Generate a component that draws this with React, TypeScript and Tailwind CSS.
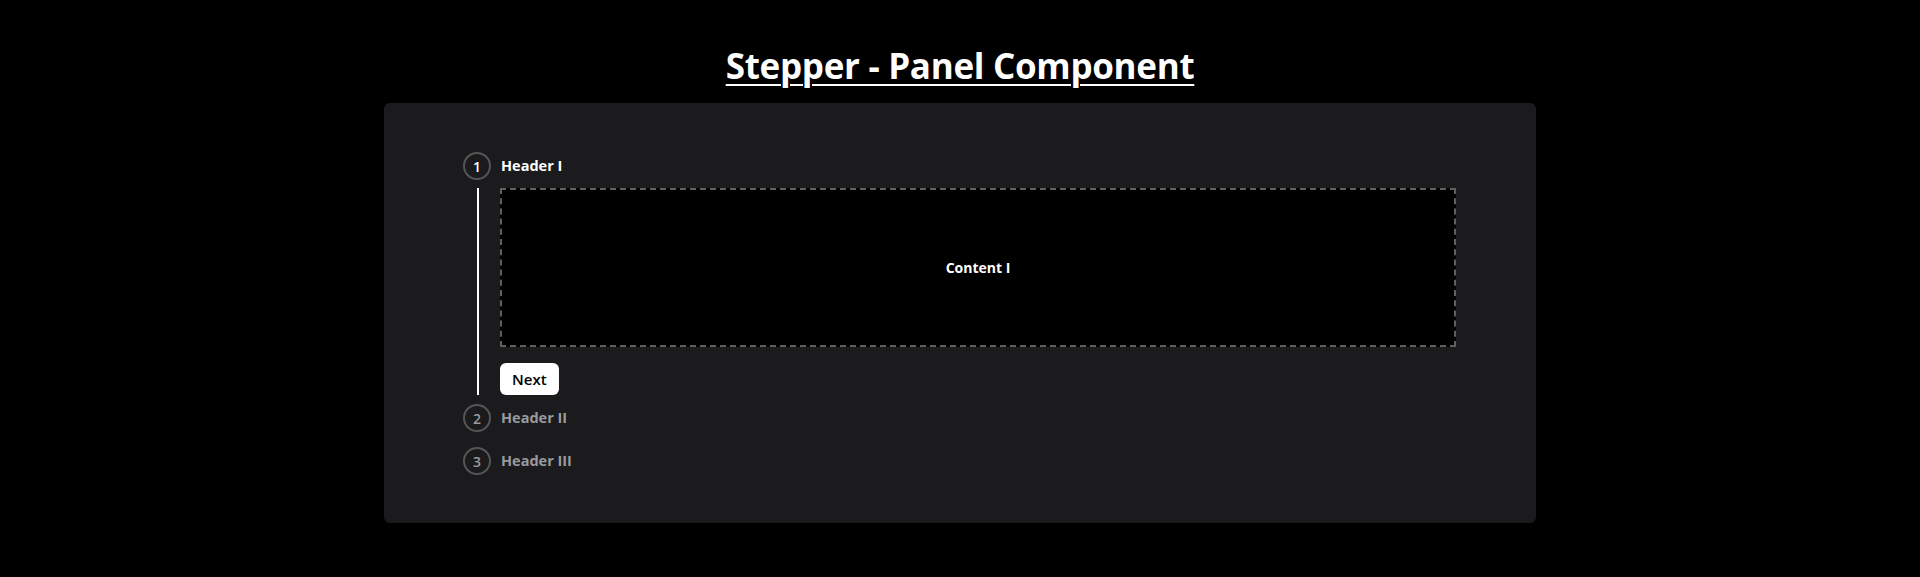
export default function App() {
  return (
    <div
      className="min-h-screen bg-black text-white pt-[42px]"
      style={{ fontFamily: '"Open Sans", "Noto Sans", sans-serif' }}
    >
      <h1 className="text-center text-[35px] leading-[48px] font-bold underline underline-offset-[5px] decoration-2 tracking-[-0.3px]">
        Stepper - Panel Component
      </h1>

      <div className="max-w-6xl mx-auto mt-[13px] bg-[#1b1b1d] rounded-md pt-[49px] pb-[48px] pl-[79px] pr-[80px]">
        {/* Step 1 */}
        <div className="flex items-center h-7">
          <div className="w-7 h-7 rounded-full border-2 border-[#555] flex items-center justify-center text-[14px] font-semibold text-white">
            1
          </div>
          <span className="ml-[10px] text-[14.5px] font-bold text-white">Header I</span>
        </div>
        <div className="ml-[14px] mt-2 border-l-2 border-white pl-[21px]">
          <div className="h-[159px] bg-black border-2 border-dashed border-[#5f5f5f] flex items-center justify-center text-[14px] font-bold text-white">
            Content I
          </div>
          <button className="mt-4 h-8 px-3 bg-white text-black rounded-md text-[15px] font-semibold">
            Next
          </button>
        </div>

        {/* Step 2 */}
        <div className="flex items-center h-7 mt-[9px]">
          <div className="w-7 h-7 rounded-full border-2 border-[#555] flex items-center justify-center text-[14px] font-semibold text-[#9a9a9e]">
            2
          </div>
          <span className="ml-[10px] text-[14.5px] font-bold text-[#9a9a9e]">Header II</span>
        </div>

        {/* Step 3 */}
        <div className="flex items-center h-7 mt-[15px]">
          <div className="w-7 h-7 rounded-full border-2 border-[#555] flex items-center justify-center text-[14px] font-semibold text-[#9a9a9e]">
            3
          </div>
          <span className="ml-[10px] text-[14.5px] font-bold text-[#9a9a9e]">Header III</span>
        </div>
      </div>
    </div>
  );
}
